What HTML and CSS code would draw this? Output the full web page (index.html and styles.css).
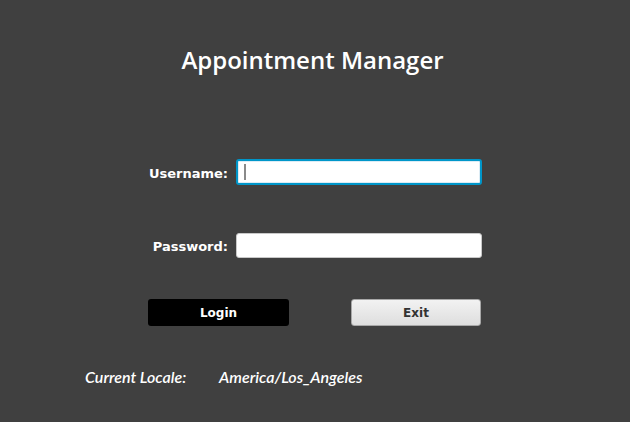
FILE: index.html
```
<!DOCTYPE html>
<html lang="en">
<head>
    <meta charset="UTF-8">
    <title>Appointment Manager</title>
    <link rel="stylesheet" href="styles.css">
</head>
<body>
    <div id="window">
        <h1 class="title">Appointment Manager</h1>
        <div class="form">
            <div class="row row-user">
                <label class="lbl" for="user">Username:</label>
                <div class="field focused" id="user"><span class="caret"></span></div>
            </div>
            <div class="row row-pass">
                <label class="lbl" for="pass">Password:</label>
                <div class="field" id="pass"></div>
            </div>
            <div class="btns">
                <span class="btn btn-login">Login</span>
                <span class="btn btn-exit">Exit</span>
            </div>
        </div>
        <div class="locale">
            <span class="loc-key">Current Locale:</span>
            <span class="loc-val">America/Los_Angeles</span>
        </div>
    </div>
</body>
</html>
```

FILE: styles.css
```
*{
    margin: 0;
    padding: 0;
    box-sizing: border-box;
}
body{
    background: #404040;
    width: 630px;
    height: 422px;
    overflow: hidden;
}
#window{
    padding-top: 43px;
}
.title{
    text-align: center;
    padding-right: 5px;
    color: #fff;
    font-family: "Open Sans", sans-serif;
    font-weight: 600;
    font-size: 24px;
    line-height: 33px;
}
.form{
    margin-left: 148px;
    width: 334px;
}
.row{
    display: flex;
    align-items: center;
}
.row-user{
    margin-top: 83px;
}
.row-pass{
    margin-top: 48px;
}
.lbl{
    width: 80px;
    padding-top: 2px;
    text-align: right;
    white-space: nowrap;
    color: #fff;
    font-family: "DejaVu Sans", sans-serif;
    font-weight: bold;
    font-size: 13px;
}
.field{
    width: 246px;
    height: 25px;
    background: #fff;
    border: 1px solid #c8c8c8;
    border-radius: 3px;
    margin-left: 8px;
    position: relative;
}
.field.focused{
    height: 26px;
    border: 2px solid #0096c9;
    box-shadow: inset 0 0 0 1px #dcecf5;
}
.caret{
    position: absolute;
    left: 6px;
    top: 3px;
    width: 2px;
    height: 16px;
    background: #8a8a8a;
}
.btns{
    display: flex;
    justify-content: space-between;
    margin-top: 41px;
}
.btn{
    display: flex;
    align-items: center;
    justify-content: center;
    height: 27px;
    font-family: "DejaVu Sans", sans-serif;
    font-weight: bold;
    font-size: 12px;
    border-radius: 3px;
}
.btn-login{
    width: 141px;
    background: #000;
    color: #fff;
}
.btn-exit{
    width: 130px;
    margin-right: 1px;
    color: #333;
    border: 1px solid #a8a8a8;
    background: linear-gradient(#f2f2f2, #dedede);
}
.locale{
    display: flex;
    margin-top: 41px;
    margin-left: 85px;
    color: #fff;
    font-family: "Lato", sans-serif;
    font-style: italic;
    font-weight: 600;
    font-size: 16px;
}
.loc-key{
    width: 134px;
}
```
